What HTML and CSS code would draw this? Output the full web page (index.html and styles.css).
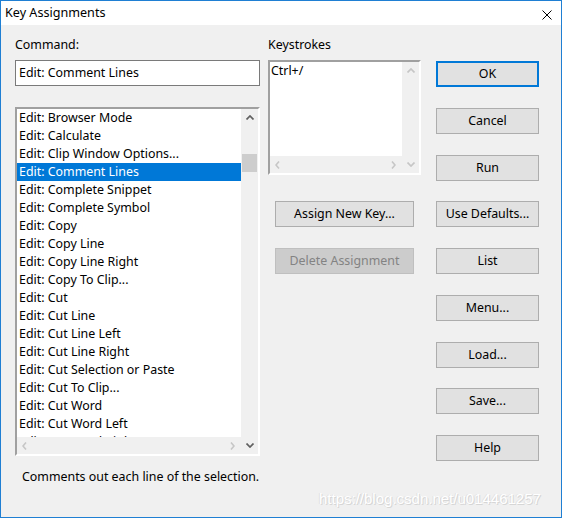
FILE: index.html
```html
<!DOCTYPE html>
<html>
<head>
<meta charset="utf-8">
<link rel="stylesheet" href="styles.css">
</head>
<body>
<div class="window">
  <div class="titlebar">
    <span class="title">Key Assignments</span>
    <svg class="close" width="10" height="10" viewBox="0 0 10 10"><path d="M0.5 0.5 L9.5 9.5 M9.5 0.5 L0.5 9.5" stroke="#000" stroke-width="1" fill="none"/></svg>
  </div>
  <div class="content">
    <div class="col-left">
      <div class="label">Command:</div>
      <div class="textbox">Edit: Comment Lines</div>
      <div class="sunken listbox">
        <div class="pane">
          <ul class="items">
            <li>Edit: Browser Mode</li>
            <li>Edit: Calculate</li>
            <li>Edit: Clip Window Options...</li>
            <li class="sel">Edit: Comment Lines</li>
            <li>Edit: Complete Snippet</li>
            <li>Edit: Complete Symbol</li>
            <li>Edit: Copy</li>
            <li>Edit: Copy Line</li>
            <li>Edit: Copy Line Right</li>
            <li>Edit: Copy To Clip...</li>
            <li>Edit: Cut</li>
            <li>Edit: Cut Line</li>
            <li>Edit: Cut Line Left</li>
            <li>Edit: Cut Line Right</li>
            <li>Edit: Cut Selection or Paste</li>
            <li>Edit: Cut To Clip...</li>
            <li>Edit: Cut Word</li>
            <li>Edit: Cut Word Left</li>
            <li>Edit: Cut Word Right</li>
          </ul>
          <div class="hscroll">
            <svg class="arr" width="5" height="8" viewBox="0 0 5 8"><polyline points="4,0.5 1,4 4,7.5" fill="none" stroke="#c6c6c6" stroke-width="1.6"/></svg>
            <svg class="arr" width="5" height="8" viewBox="0 0 5 8"><polyline points="1,0.5 4,4 1,7.5" fill="none" stroke="#c6c6c6" stroke-width="1.6"/></svg>
          </div>
        </div>
        <div class="vscroll">
          <div class="vbtn"><svg width="8" height="5" viewBox="0 0 8 5"><polyline points="0.5,4.5 4,1 7.5,4.5" fill="none" stroke="#606060" stroke-width="1.7"/></svg></div>
          <div class="track"><div class="thumb"></div></div>
          <div class="vbtn"><svg width="8" height="5" viewBox="0 0 8 5"><polyline points="0.5,0.5 4,4 7.5,0.5" fill="none" stroke="#606060" stroke-width="1.7"/></svg></div>
        </div>
      </div>
      <div class="desc">Comments out each line of the selection.</div>
    </div>
    <div class="col-mid">
      <div class="label">Keystrokes</div>
      <div class="sunken keybox">
        <div class="pane">
          <div class="keys">Ctrl+/</div>
          <div class="hscroll">
            <svg class="arr" width="5" height="8" viewBox="0 0 5 8"><polyline points="4,0.5 1,4 4,7.5" fill="none" stroke="#c6c6c6" stroke-width="1.6"/></svg>
            <svg class="arr" width="5" height="8" viewBox="0 0 5 8"><polyline points="1,0.5 4,4 1,7.5" fill="none" stroke="#c6c6c6" stroke-width="1.6"/></svg>
          </div>
        </div>
        <div class="vscroll">
          <div class="vbtn"><svg width="8" height="5" viewBox="0 0 8 5"><polyline points="0.5,4.5 4,1 7.5,4.5" fill="none" stroke="#c6c6c6" stroke-width="1.7"/></svg></div>
          <div class="track"></div>
          <div class="vbtn"><svg width="8" height="5" viewBox="0 0 8 5"><polyline points="0.5,0.5 4,4 7.5,0.5" fill="none" stroke="#c6c6c6" stroke-width="1.7"/></svg></div>
        </div>
      </div>
      <button class="btn assign">Assign New Key...</button>
      <button class="btn delete" disabled>Delete Assignment</button>
    </div>
    <div class="col-right">
      <button class="btn default">OK</button>
      <button class="btn">Cancel</button>
      <button class="btn">Run</button>
      <button class="btn">Use Defaults...</button>
      <button class="btn">List</button>
      <button class="btn">Menu...</button>
      <button class="btn">Load...</button>
      <button class="btn">Save...</button>
      <button class="btn">Help</button>
    </div>
  </div>
  <div class="watermark">https://blog.csdn.net/u014461257</div>
</div>
</body>
</html>
```

FILE: styles.css
```css
* { box-sizing: border-box; }
html, body { margin: 0; padding: 0; background: #f0f0f0; }
body {
  font-family: "Noto Sans", "Open Sans", sans-serif;
  font-size: 12.4px;
  color: #000;
}
.window {
  position: relative;
  width: 562px;
  height: 518px;
  border: 1px solid #1f7fd3;
  background: #f0f0f0;
  display: flex;
  flex-direction: column;
  overflow: hidden;
}
.titlebar {
  height: 24px;
  background: #fff;
  display: flex;
  align-items: center;
  justify-content: space-between;
  padding-left: 4px;
  padding-right: 9px;
}
.title { font-size: 12.6px; line-height: 24px; }
.close { display: block; margin-top: 3px; }

.content {
  display: flex;
  padding: 12px 0 0 14px;
  flex: 1;
}
.label { height: 16px; line-height: 16px; }

.col-left { width: 245px; display: flex; flex-direction: column; }
.textbox {
  margin-top: 7px;
  height: 26px;
  border: 1px solid #7a7a7a;
  background: #fff;
  line-height: 24px;
  padding-left: 3px;
}
.sunken {
  border: 2px solid;
  border-color: #a0a0a0 #ffffff #ffffff #a0a0a0;
  box-shadow: inset 1px 1px 0 #696969, inset -1px -1px 0 #e3e3e3;
  background: #fff;
  display: flex;
}
.sunken .pane { flex: 1; display: flex; flex-direction: column; min-width: 0; background: #fff; }
.listbox { margin-top: 21px; height: 349px; }
.items {
  list-style: none;
  margin: 0;
  padding: 0;
  flex: 1;
  overflow: hidden;
}
.items li {
  height: 18px;
  line-height: 18px;
  padding-left: 2px;
  white-space: nowrap;
}
.items li.sel { background: #0078d7; color: #fff; }

.hscroll {
  height: 17px;
  flex: none;
  background: #f0f0f0;
  display: flex;
  align-items: center;
  justify-content: space-between;
  padding: 0 6px 0 5px;
}
.arr { display: block; }
.vscroll {
  width: 17px;
  flex: none;
  background: #f0f0f0;
  display: flex;
  flex-direction: column;
}
.vbtn {
  height: 17px;
  flex: none;
  display: flex;
  align-items: center;
  justify-content: center;
}
.vbtn svg { display: block; }
.track { flex: 1; }
.thumb {
  margin: 28px 1px 0 1px;
  height: 18px;
  background: #cdcdcd;
}
.desc {
  margin-top: 13px;
  padding-left: 7px;
  line-height: 16px;
}

.col-mid { width: 153px; margin-left: 8px; display: flex; flex-direction: column; }
.keybox { margin-top: 7px; height: 115px; }
.keys { flex: 1; line-height: 18px; padding-left: 1px; }

.btn {
  font: inherit;
  color: #000;
  background: #e1e1e1;
  border: 1px solid #adadad;
  height: 26px;
  padding: 0;
  margin: 0;
  line-height: 22px;
  text-align: center;
}
.btn.default { border: 2px solid #0078d7; }
.assign { margin-top: 26px; margin-left: 7px; width: 139px; }
.delete {
  margin-top: 21px;
  margin-left: 7px;
  width: 139px;
  background: #cccccc;
  border-color: #bfbfbf;
  color: #838383;
}

.col-right {
  width: 103px;
  margin-left: 15px;
  padding-top: 24px;
  display: flex;
  flex-direction: column;
  gap: 20.75px;
}
.col-right .btn { width: 103px; }

.watermark {
  position: absolute;
  left: 318px;
  top: 489px;
  font-family: "Liberation Sans", sans-serif;
  font-size: 15px;
  color: #ffffff;
  text-shadow: 1px 1px 0 #d6d6d6, -1px 0 0 #e2e2e2;
  white-space: nowrap;
}
```
